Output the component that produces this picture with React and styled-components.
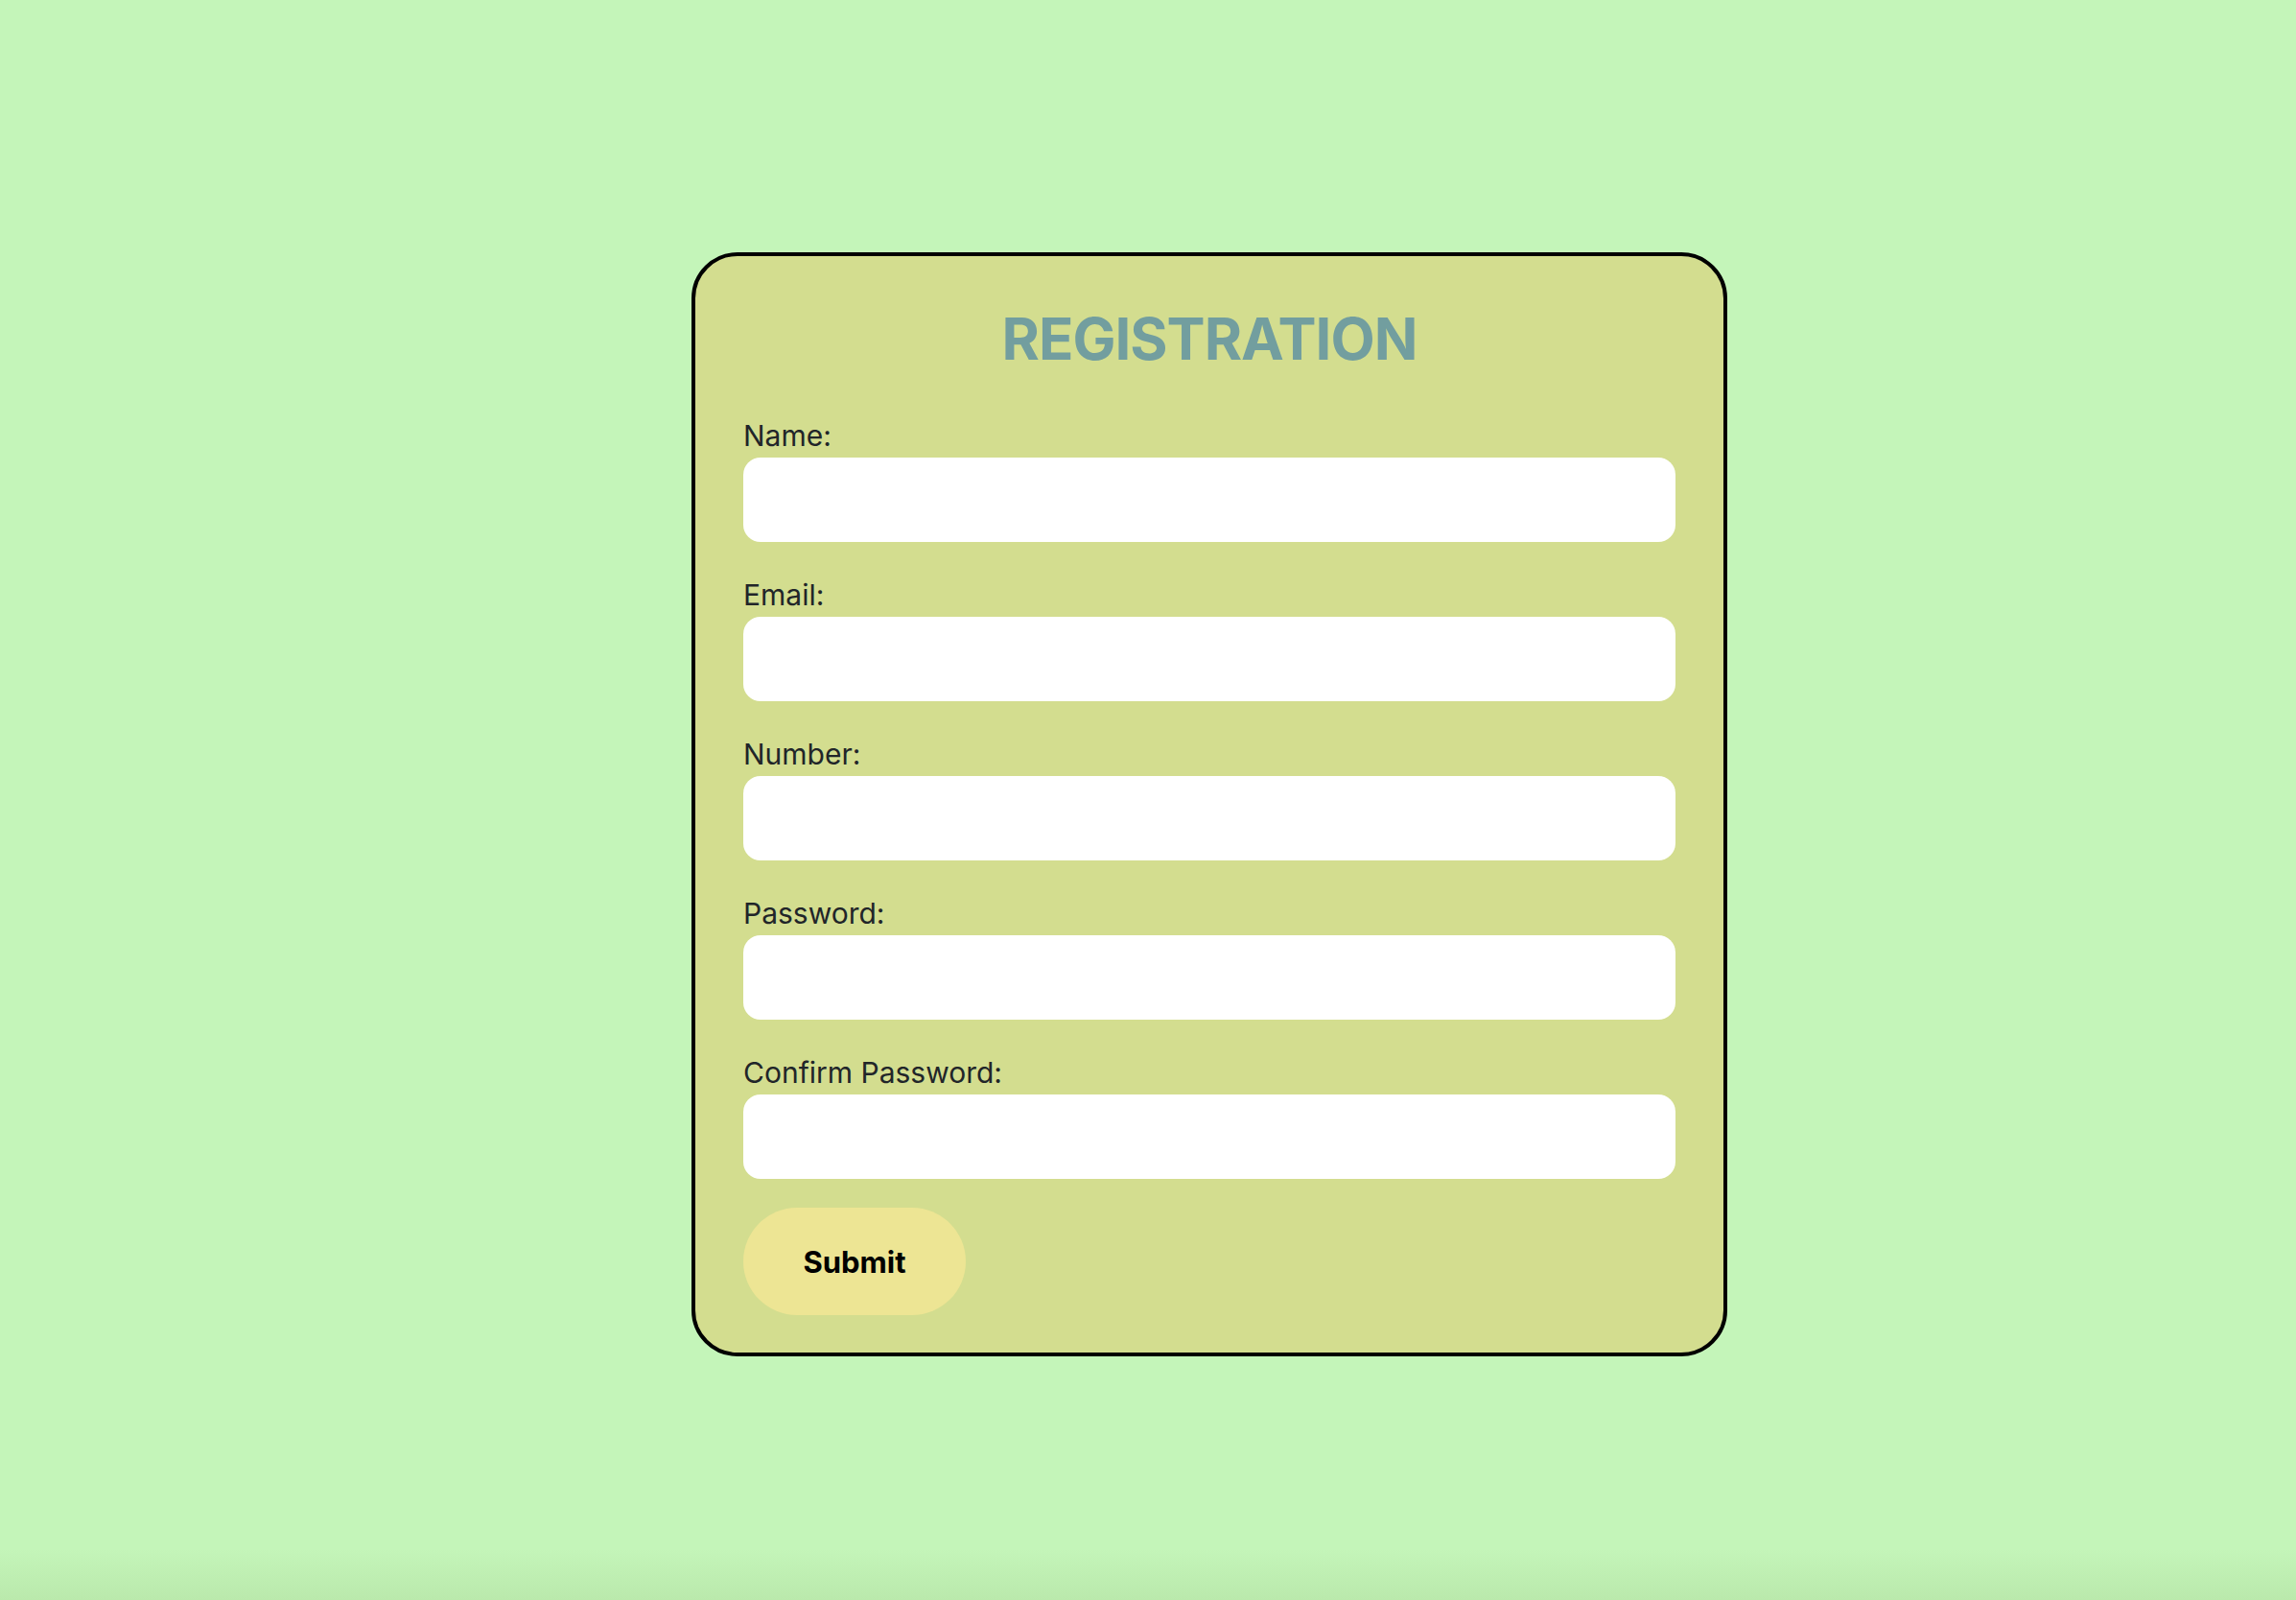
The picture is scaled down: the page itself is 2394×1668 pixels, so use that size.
import React from "react";
import styled, { createGlobalStyle } from "styled-components";

const Global = createGlobalStyle`
  html, body {
    margin: 0;
    padding: 0;
    overflow: hidden;
  }
  body {
    background: #c4f5b9;
    font-family: Inter, "Noto Sans", "Liberation Sans", sans-serif;
    color: #212529;
  }
  * { box-sizing: border-box; }
`;

const Page = styled.main`
  height: 1668px;
  display: flex;
  justify-content: center;
  align-items: flex-start;
  padding: 263px 0 0 128px;
  background: linear-gradient(to bottom, #c4f5b9 0, #c4f5b9 1615px, #bae9ac 1668px);
`;

const Card = styled.form`
  width: 1080px;
  border: 4px solid #000;
  border-radius: 48px;
  background: #d3dd8f;
  padding: 50px 50px 39px;
  display: flex;
  flex-direction: column;
  align-items: flex-start;
`;

const Title = styled.h1`
  align-self: stretch;
  margin: 0 0 43px;
  text-align: center;
  font-size: 60px;
  line-height: 72px;
  font-weight: 700;
  letter-spacing: -1px;
  color: #729e9f;
`;

const FieldList = styled.div`
  align-self: stretch;
  display: flex;
  flex-direction: column;
  gap: 33px;
`;

const Field = styled.div`
  display: flex;
  flex-direction: column;
`;

const Label = styled.label`
  font-size: 30px;
  line-height: 45px;
  font-weight: 400;
  color: #212529;
`;

const Input = styled.input`
  width: 100%;
  height: 88px;
  border: none;
  border-radius: 18px;
  background: #fff;
  padding: 0 24px;
  font-size: 30px;
  font-family: inherit;
  outline: none;
`;

const Button = styled.button`
  margin-top: 30px;
  width: 232px;
  height: 112px;
  border: none;
  border-radius: 56px;
  background: #ede594;
  color: #000;
  font-family: inherit;
  font-size: 31px;
  font-weight: 700;
  cursor: pointer;
`;

const fields = [
  { id: "name", label: "Name:", type: "text" },
  { id: "email", label: "Email:", type: "email" },
  { id: "number", label: "Number:", type: "tel" },
  { id: "password", label: "Password:", type: "password" },
  { id: "confirm", label: "Confirm Password:", type: "password" },
];

export default function App() {
  return (
    <>
      <Global />
      <Page>
        <Card onSubmit={(e) => e.preventDefault()}>
          <Title>REGISTRATION</Title>
          <FieldList>
            {fields.map((f) => (
              <Field key={f.id}>
                <Label htmlFor={f.id}>{f.label}</Label>
                <Input id={f.id} type={f.type} />
              </Field>
            ))}
          </FieldList>
          <Button type="submit">Submit</Button>
        </Card>
      </Page>
    </>
  );
}
